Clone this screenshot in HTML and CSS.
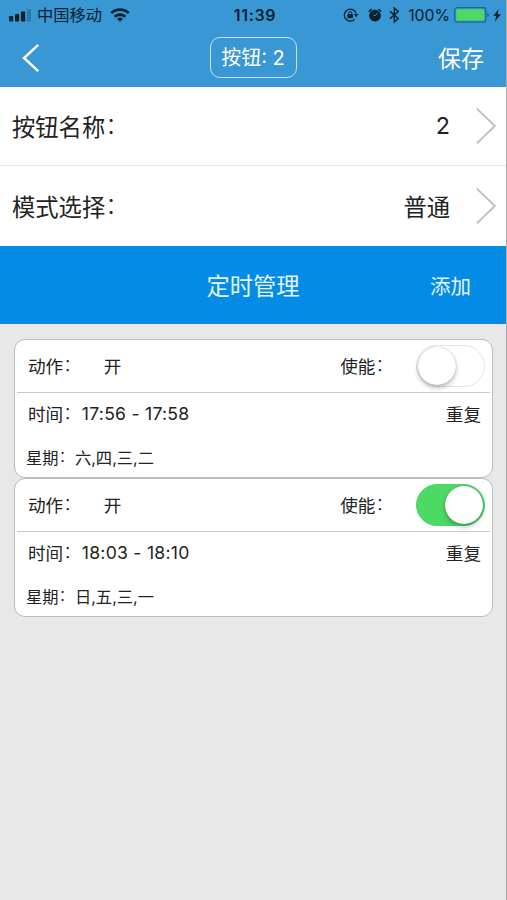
FILE: index.html
```html
<!DOCTYPE html>
<html lang="zh-CN">
<head>
  <meta charset="UTF-8">
  <meta name="viewport" content="width=device-width, initial-scale=1.0">
  <title>按钮设置</title>
  <link rel="stylesheet" href="styles.css">
</head>
<body>
  <header>
    <div class="status">
      <div class="status-left">
        <svg class="signal" width="23" height="13" viewBox="0 0 23 13">
          <rect x="0" y="7" width="4.2" height="5.5" rx="1"/>
          <rect x="6" y="5" width="4.2" height="7.5" rx="1"/>
          <rect x="12" y="2.5" width="4.2" height="10" rx="1"/>
          <rect x="18" y="0" width="4" height="12.5" rx="1" opacity=".25"/>
        </svg>
        <span class="carrier">中国移动</span>
        <svg class="wifi" width="20" height="14" viewBox="0 0 20 14" fill="none" stroke="#07212f" stroke-width="2.6">
          <path d="M1.2 5.2a12.5 12.5 0 0 1 17.6 0"/>
          <path d="M4.6 8.8a7.7 7.7 0 0 1 10.8 0"/>
          <path d="M10 13.8L7 10.9a4.3 4.3 0 0 1 6 0z" fill="#07212f" stroke="none"/>
        </svg>
      </div>
      <span class="clock">11:39</span>
      <div class="status-right">
        <svg class="lock" width="16" height="14" viewBox="0 0 16 14" fill="none" stroke="#07212f" stroke-width="1.3">
          <path d="M13.1 5.4a6 6 0 1 0-1.5 6"/>
          <path d="M10.8 6h4.6l-2.3 3.2z" fill="#07212f" stroke="none"/>
          <rect x="4.5" y="6.2" width="5.4" height="4" fill="#07212f" stroke="none"/>
          <path d="M5.6 6.5V5.2a1.6 1.6 0 0 1 3.2 0v1.3" stroke-width="1"/>
        </svg>
        <svg class="alarm" width="14" height="14" viewBox="0 0 14 14">
          <circle cx="7" cy="7.6" r="5.9"/>
          <path d="M.8 3.6L3.6 1M13.2 3.6L10.4 1" stroke="#07212f" stroke-width="1.7"/>
          <path d="M9.4 5.2L7 7.8 5.2 6.8" fill="none" stroke="#3997d4" stroke-width=".9"/>
        </svg>
        <svg class="bluetooth" width="11" height="16" viewBox="0 0 11 16" fill="none" stroke="#07212f" stroke-width="1.4">
          <path d="M1 4.4l8.2 7L5.3 15V1l3.9 3.6-8.2 7"/>
        </svg>
        <span class="percent">100%</span>
        <svg class="battery" width="36" height="16" viewBox="0 0 36 16">
          <rect x=".7" y=".7" width="31" height="14.4" rx="2.6" fill="none" stroke="#25678f" stroke-width="1.3"/>
          <rect x="2.2" y="2.2" width="28" height="11.4" rx="1" fill="#4cd964"/>
          <path d="M33.2 5.5a2.6 2.6 0 0 1 0 5z" fill="#25678f"/>
        </svg>
        <svg class="bolt" width="8" height="13" viewBox="0 0 8 13">
          <path d="M5.7 0L.3 7h3L1.9 12.5 7.8 5.2H4.6z"/>
        </svg>
      </div>
    </div>
    <div class="navbar">
      <svg class="back" width="18" height="30" viewBox="0 0 18 30" fill="none" stroke="#fff" stroke-width="2.4">
        <path d="M16.2 1.8L2 15l14.2 13.2"/>
      </svg>
      <div class="title">按钮: 2</div>
      <span class="save">保存</span>
    </div>
  </header>

  <div class="row">
    <span>按钮名称<span class="colon">：</span></span>
    <span class="value">2</span>
    <svg width="20" height="38" viewBox="0 0 20 38" fill="none" stroke="#bfbfbf" stroke-width="1.9">
      <path d="M.8 1.6L18.8 19 .8 36.4"/>
    </svg>
  </div>
  <div class="row">
    <span>模式选择<span class="colon">：</span></span>
    <span class="value">普通</span>
    <svg width="20" height="38" viewBox="0 0 20 38" fill="none" stroke="#bfbfbf" stroke-width="1.9">
      <path d="M.8 1.6L18.8 19 .8 36.4"/>
    </svg>
  </div>

  <div class="timer-bar">
    <span class="timer-title">定时管理</span>
    <span class="add">添加</span>
  </div>

  <div class="list">
    <div class="card">
      <div class="card-top">
        <span class="label">动作<span class="colon">：</span></span>
        <span class="action">开</span>
        <span class="enable">使能<span class="colon">：</span></span>
        <div class="switch"></div>
      </div>
      <div class="time">
        <span>时间<span class="colon">：</span></span>
        <span class="range">17:56 - 17:58</span>
        <span class="repeat">重复</span>
      </div>
      <div class="week">星期<span class="colon">：</span>六,四,三,二</div>
    </div>
    <div class="card">
      <div class="card-top">
        <span class="label">动作<span class="colon">：</span></span>
        <span class="action">开</span>
        <span class="enable">使能<span class="colon">：</span></span>
        <div class="switch on"></div>
      </div>
      <div class="time">
        <span>时间<span class="colon">：</span></span>
        <span class="range">18:03 - 18:10</span>
        <span class="repeat">重复</span>
      </div>
      <div class="week">星期<span class="colon">：</span>日,五,三,一</div>
    </div>
  </div>
</body>
</html>
```
FILE: styles.css
```css
* {
  box-sizing: border-box;
}
body {
  margin: 0;
  height: 900px;
  background: #e8e8e8;
  border-right: 1px solid #a9abad;
  font-family: Inter, "Noto Sans CJK SC", sans-serif;
  color: #222;
  white-space: nowrap;
  overflow: hidden;
}
svg {
  display: block;
  flex: none;
}
header {
  height: 87px;
  background: #3997d4;
}
.status {
  height: 30px;
  display: grid;
  grid-template-columns: 1fr auto 1fr;
  align-items: center;
  padding: 0 5px 0 9px;
  color: #07212f;
  fill: #07212f;
}
.status-left,
.status-right {
  display: flex;
  align-items: center;
}
.status-right {
  justify-content: flex-end;
}
.carrier {
  margin: 0 8px 0 5px;
  font-size: 16.3px;
  line-height: 30px;
}
.clock {
  font-size: 16px;
  font-weight: 600;
  letter-spacing: 0.7px;
}
.alarm {
  margin-left: 9px;
}
.bluetooth {
  margin-left: 7px;
}
.percent {
  margin: 0 4px 0 8px;
  font-size: 15.8px;
}
.bolt {
  margin-left: 3px;
}
.navbar {
  height: 57px;
  display: grid;
  grid-template-columns: 1fr auto 1fr;
  align-items: center;
  padding: 0 22px 2px;
  color: #fff;
}
.title {
  width: 87px;
  height: 41px;
  border: 1.5px solid #c4e2f5;
  border-radius: 10px;
  font-size: 20px;
  line-height: 40px;
  text-align: center;
}
.save {
  justify-self: end;
  padding-bottom: 2px;
  font-size: 23px;
}
.colon {
  font-weight: 300;
  line-height: 1;
  vertical-align: 0.1em;
}
.row {
  height: 79px;
  display: flex;
  align-items: center;
  padding: 0 10px 0 12px;
  background: #fff;
  border-bottom: 1px solid #e5e5e5;
  font-size: 23.3px;
}
.row + .row {
  height: 80px;
  border-bottom: none;
}
.row > span {
  padding-bottom: 1px;
}
.value {
  margin-left: auto;
  margin-right: 26px;
}
.timer-bar {
  height: 78px;
  display: grid;
  grid-template-columns: 1fr auto 1fr;
  align-items: center;
  padding: 0 35px;
  background: #048be5;
  color: #e6f5ff;
}
.timer-title {
  grid-column: 2;
  font-size: 23.3px;
}
.add {
  justify-self: end;
  font-size: 20.5px;
}
.list {
  padding: 15px 13px 0 14px;
}
.card {
  height: 139px;
  background: #fff;
  border: 1px solid #bcbcbc;
  border-radius: 11px;
  padding: 0 2px;
  font-size: 17.6px;
}
.card-top {
  height: 53px;
  display: flex;
  align-items: center;
  padding: 0 5px 0 11px;
  border-bottom: 1px solid #c8c8c8;
}
.card-top > span {
  padding-bottom: 2px;
}
.action {
  margin-left: 23px;
}
.enable {
  margin-left: auto;
}
.switch {
  width: 69px;
  height: 42px;
  margin-left: 23px;
  padding: 1px;
  border: 1px solid #e2e2e2;
  border-radius: 21px;
}
.switch::before {
  content: "";
  display: block;
  width: 38px;
  height: 38px;
  border-radius: 50%;
  background: #fff;
  box-shadow: 0 3px 5px rgba(0, 0, 0, 0.25), 0 0 1px rgba(0, 0, 0, 0.4);
}
.switch.on {
  background: #4cd964;
  border-color: #4cd964;
}
.switch.on::before {
  margin-left: auto;
}
.time {
  height: 40px;
  display: flex;
  align-items: center;
  padding: 0 9px 0 11px;
}
.range {
  margin-left: 1px;
  letter-spacing: 0.25px;
}
.repeat {
  margin-left: auto;
}
.week {
  padding: 0 9px;
  font-size: 16.3px;
  line-height: 51px;
}
```
